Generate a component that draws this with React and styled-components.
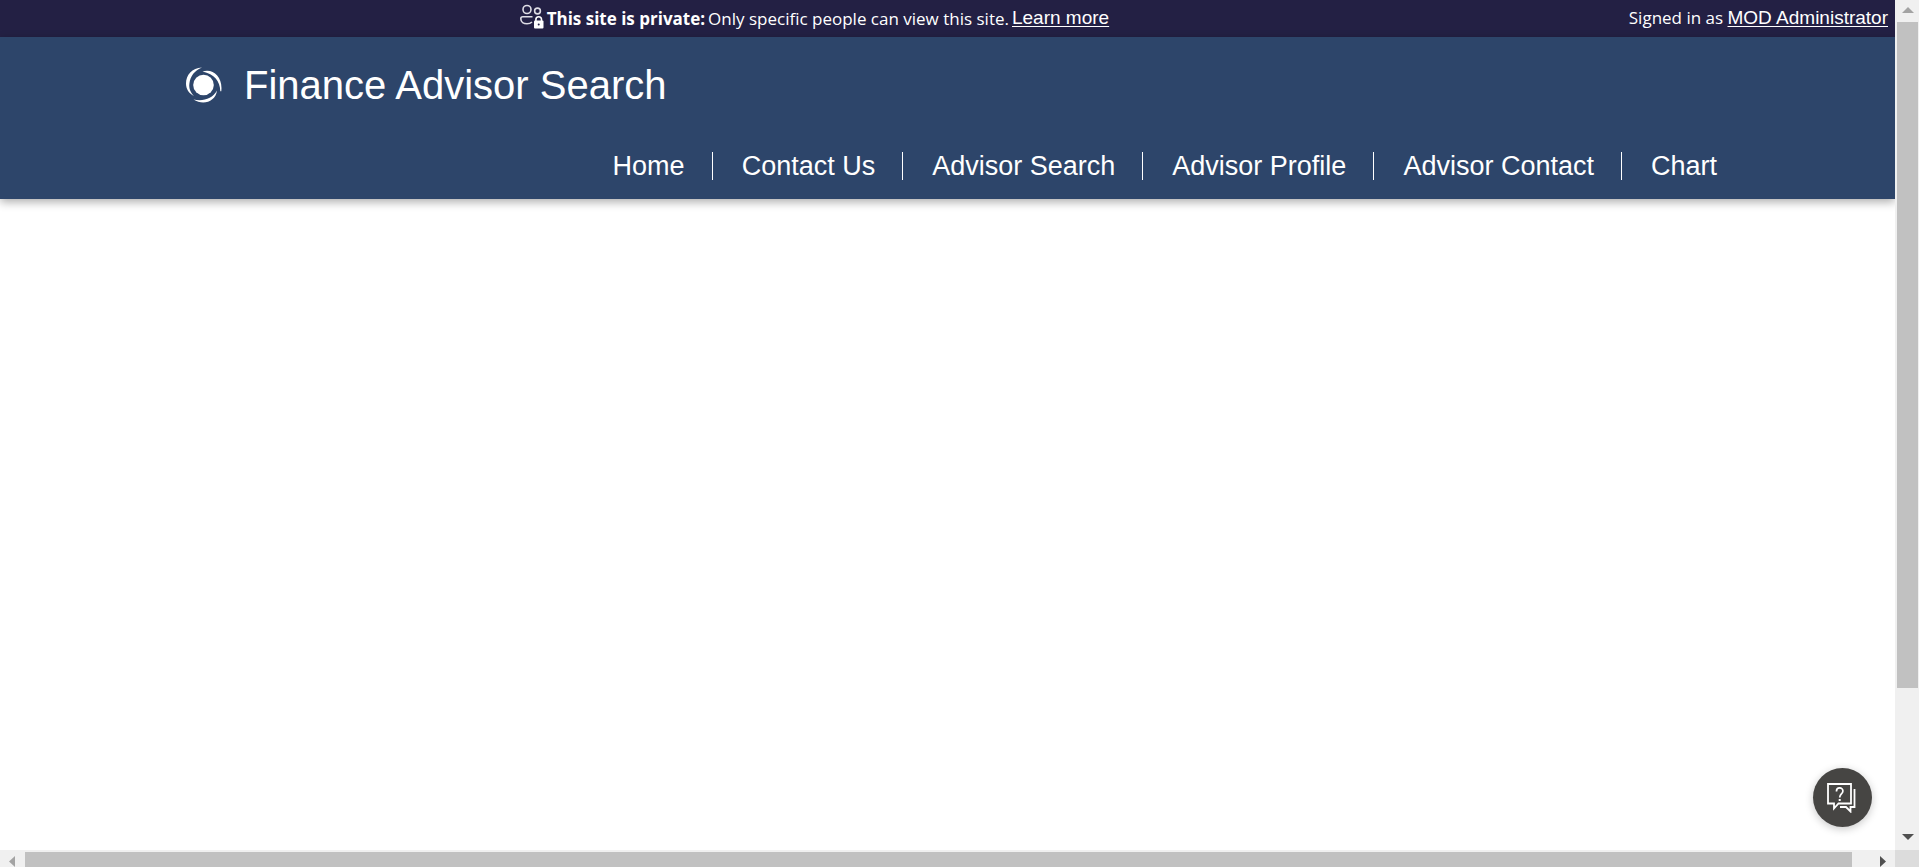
import React from 'react';
import styled, { createGlobalStyle } from 'styled-components';

const GlobalStyle = createGlobalStyle`
  * { box-sizing: border-box; }
  body { margin: 0; background: #fff; font-family: "Liberation Sans", Arial, sans-serif; overflow: hidden; }
`;

const Frame = styled.div`
  display: grid;
  grid-template-columns: minmax(0, 1fr) 24px;
  grid-template-rows: minmax(0, 1fr) 17px;
  height: 100vh;
`;

const Page = styled.div`
  position: relative;
  overflow: hidden;
  background: #fff;
`;

const Banner = styled.div`
  display: flex;
  align-items: center;
  height: 37px;
  padding-right: 7px;
  background: #232044;
  color: #fff;
  font-family: "Open Sans", "Segoe UI", sans-serif;
  font-size: 17px;
  line-height: 36px;
  white-space: nowrap;
`;

const PrivacyNotice = styled.div`
  flex: 1;
  display: flex;
  justify-content: center;
  align-items: center;
  gap: 3px;
`;

const Account = styled.div`
  padding-bottom: 2px;
`;

const PeopleLockIcon = styled.svg`
  width: 24px;
  height: 26px;
  margin-bottom: 3px;
`;

const BannerLink = styled.a`
  padding-bottom: 2px;
  color: inherit;
  font-family: "Liberation Sans", Arial, sans-serif;
  font-size: 19px;
  text-underline-offset: 2px;
  text-decoration-thickness: 1px;
`;

const Header = styled.header`
  padding: 20px 178px 0 186px;
  height: 162px;
  background: #2d456a;
  color: #fff;
  box-shadow: 0 3px 9px rgba(0, 0, 0, 0.33);
`;

const Brand = styled.div`
  display: flex;
  align-items: center;
  gap: 22px;
  height: 56px;
`;

const Logo = styled.svg`
  width: 36px;
  height: 36px;
`;

const Title = styled.h1`
  margin: 0;
  font-size: 40px;
  font-weight: 400;
  line-height: 56px;
  white-space: nowrap;
`;

const Nav = styled.nav`
  display: flex;
  justify-content: flex-end;
  margin-top: 39px;
`;

const NavLink = styled.a`
  padding-right: ${({ $last }) => ($last ? 0 : 27)}px;
  margin-left: ${({ $first }) => ($first ? 0 : 29)}px;
  border-right: ${({ $last }) => ($last ? 0 : 1)}px solid #fff;
  color: inherit;
  font-size: 27px;
  line-height: 28px;
  text-decoration: none;
  white-space: nowrap;
`;

const ChatButton = styled.button`
  position: absolute;
  right: 23px;
  bottom: 23px;
  display: grid;
  place-items: center;
  width: 59px;
  height: 59px;
  padding: 0;
  border: 0;
  border-radius: 50%;
  background: #464543;
  box-shadow: 0 2px 8px rgba(0, 0, 0, 0.22);
`;

const VerticalTrack = styled.div`
  display: flex;
  flex-direction: column;
  align-items: center;
  padding: 7px 1px 10px 2px;
  gap: 9px;
  background: #f0f0f0;
`;

const HorizontalTrack = styled.div`
  display: flex;
  align-items: flex-end;
  padding: 2px 9px 0 9px;
  gap: 10px;
  background: #f0f0f0;
`;

const ThumbLane = styled.div`
  flex: 1;
  display: flex;
  flex-direction: ${({ $vertical }) => ($vertical ? 'column' : 'row')};
  align-self: stretch;
`;

const Thumb = styled.div`
  flex: 0 0 ${({ $share }) => $share}%;
  background: #c1c1c1;
`;

const Corner = styled.div`
  background: #dcdcdc;
`;

const links = ['Home', 'Contact Us', 'Advisor Search', 'Advisor Profile', 'Advisor Contact', 'Chart'];

export default function App() {
  return (
    <>
      <GlobalStyle />
      <Frame>
        <Page>
          <Banner>
            <PrivacyNotice>
              <PeopleLockIcon viewBox="0 0 24 26" fill="none" stroke="#dedde5" strokeWidth="1.6" aria-hidden="true">
                <circle cx="7" cy="5.500" r="4" />
                <circle cx="17.500" cy="7" r="2.900" />
                <path d="M12.500 12.800H2.800a2 2 0 0 0-2 2c0 3.200 2.900 5 6.200 5 2.200 0 3.900-.7 5-1.800" />
                <path d="M15.900 18v-2.500a2.800 2.800 0 0 1 5.600 0V18" stroke="#fff" />
                <rect x="14" y="16.500" width="9.500" height="8" rx="1" fill="#fff" stroke="none" />
                <circle cx="18.700" cy="20.500" r="1" fill="#232044" stroke="none" />
              </PeopleLockIcon>
              <strong>This site is private:</strong>
              <span>Only specific people can view this site.</span>
              <BannerLink href="#learn">Learn more</BannerLink>
            </PrivacyNotice>
            <Account>
              Signed in as <BannerLink href="#account">MOD Administrator</BannerLink>
            </Account>
          </Banner>
          <Header>
            <Brand>
              <Logo viewBox="0 0 36 36" fill="#fff" aria-hidden="true">
                <circle cx="17.500" cy="18" r="10.300" />
                <path d="M16 .5C6 1 0 8 0 16.500c0 5.500 3 10 8 12.500C4.500 25.500 2.700 21.500 3.400 16.500 4.400 9 8.500 3.500 16 .5Z" />
                <path d="M16.500 4.500C27 1 37 10 35.300 24.200h-1C34 14 28.500 7 16.500 4.500Z" />
                <path d="M31 23.500C29.500 35 17 38.500 7.500 32.500 17 34.500 26.500 32 31 23.500Z" />
              </Logo>
              <Title>Finance Advisor Search</Title>
            </Brand>
            <Nav aria-label="Main">
              {links.map((label, i) => (
                <NavLink key={label} href="#page" $first={i === 0} $last={i === links.length - 1}>
                  {label}
                </NavLink>
              ))}
            </Nav>
          </Header>
          <ChatButton aria-label="Help chat">
            <svg width="31" height="31" viewBox="0 0 31 31" fill="none" stroke="#fff" strokeWidth="1.800" aria-hidden="true">
              <path d="M1 2h23v19.500H11.500L7 26.500v-5H1Z" />
              <path d="M27.500 7v18h-4v4.500L19 25h-6" />
              <path d="M9.500 9.500V9a3.200 3.200 0 0 1 6.400 0c0 3-3.200 3-3.200 6.500" strokeWidth="1.700" />
              <path d="M11.700 17h2v2h-2z" fill="#fff" stroke="none" />
            </svg>
          </ChatButton>
        </Page>
        <VerticalTrack aria-hidden="true">
          <svg width="12" height="6"><path d="M0 6 6 0l6 6Z" fill="#a3a3a3" /></svg>
          <ThumbLane $vertical><Thumb $share={83} /></ThumbLane>
          <svg width="12" height="6"><path d="M0 0h12L6 6Z" fill="#505050" /></svg>
        </VerticalTrack>
        <HorizontalTrack aria-hidden="true">
          <svg width="6" height="11"><path d="M6 0v11L0 5.500Z" fill="#a3a3a3" /></svg>
          <ThumbLane><Thumb $share={99} /></ThumbLane>
          <svg width="6" height="11"><path d="M0 0v11l6-5.500Z" fill="#505050" /></svg>
        </HorizontalTrack>
        <Corner />
      </Frame>
    </>
  );
}
